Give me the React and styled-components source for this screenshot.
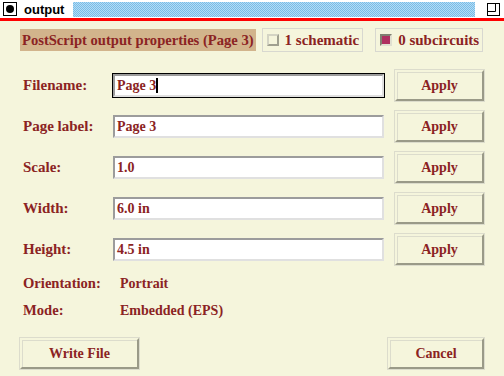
import React from "react";
import styled, { createGlobalStyle, css } from "styled-components";

const ink = "#8b2323";
const paper = "#f5f5dc";

const GlobalStyle = createGlobalStyle`
  html, body {
    margin: 0;
    padding: 0;
    background: ${paper};
  }
  #root {
    width: 504px;
    height: 376px;
  }
`;

const Window = styled.div`
  display: flex;
  flex-direction: column;
  width: 504px;
  height: 376px;
  background: ${paper};
  font-family: "Liberation Serif", "Times New Roman", serif;
  font-weight: bold;
  font-size: 14px;
  color: ${ink};
  overflow: hidden;
`;

const TitleBar = styled.div`
  display: flex;
  align-items: center;
  height: 18px;
  background: #ffffff;
  border-bottom: 3px solid #ff0000;
  padding: 0 4px 0 3px;
`;

const CloseBox = styled.div`
  display: flex;
  align-items: center;
  justify-content: center;
  width: 12px;
  height: 12px;
  border: 1px solid #000;
  &::after {
    content: "";
    width: 8px;
    height: 8px;
    border-radius: 50%;
    background: #000;
  }
`;

const Title = styled.div`
  font-family: "Liberation Sans", Arial, sans-serif;
  font-weight: bold;
  font-size: 13px;
  color: #000;
  margin-left: 7px;
  width: 42px;
`;

const Hatch = styled.div`
  flex: 1;
  height: 15px;
  margin: 0 12px 0 7px;
  background-color: #96cced;
  background-image: repeating-conic-gradient(#78bce8 0 25%, #b4dcf4 0 50%);
  background-size: 2px 2px;
`;

const MaxIcon = styled.svg`
  width: 13px;
  height: 13px;
  display: block;
`;

const Body = styled.div`
  display: flex;
  flex-direction: column;
  padding: 7px 20px 0 20px;
`;

const HeaderRow = styled.div`
  display: flex;
  align-items: center;
  height: 24px;
`;

const HeaderLabel = styled.div`
  display: flex;
  align-items: center;
  height: 22px;
  padding: 0 2px;
  background: #d2b48c;
  font-size: 14.6px;
  white-space: nowrap;
`;

const Toggle = styled.div`
  display: flex;
  align-items: center;
  gap: 6px;
  height: 22px;
  margin-left: ${(p) => p.gap}px;
  padding: 0 3px 0 4px;
  border: 1px solid #d8d8d0;
  font-size: 15px;
  white-space: nowrap;
`;

const Check = styled.div`
  width: 8px;
  height: 8px;
  border: 2px solid;
  border-color: #d4d4c4 #a0a090 #a0a090 #d4d4c4;
  background: ${paper};
  ${(p) =>
    p.on &&
    css`
      border-color: #808070 #e0e0d0 #e0e0d0 #808070;
      background: #b03060;
    `}
`;

const Fields = styled.div`
  display: flex;
  flex-direction: column;
  gap: 10px;
  margin-top: 18px;
`;

const FieldRow = styled.div`
  display: grid;
  grid-template-columns: 82px 271px 89px;
  column-gap: 11px;
  align-items: center;
  height: 31px;
`;

const Label = styled.div`
  padding-left: 3px;
  font-size: 15px;
  white-space: nowrap;
`;

const Input = styled.div`
  display: flex;
  align-items: center;
  box-sizing: border-box;
  height: 23px;
  padding-left: 2px;
  background: #ffffff;
  border: 2px solid;
  border-color: #9c9c9c #e0e0e0 #e0e0e0 #9c9c9c;
  ${(p) =>
    p.focused &&
    css`
      outline: 1px solid #000;
    `}
`;

const Caret = styled.span`
  display: inline-block;
  width: 2px;
  height: 15px;
  background: #000;
`;

const Button = styled.div`
  display: flex;
  align-items: center;
  justify-content: center;
  box-sizing: border-box;
  width: ${(p) => p.w}px;
  height: 31px;
  border: 2px solid;
  border-color: #f5f5dc #9a9a88 #9a9a88 #f5f5dc;
  box-shadow: 0 0 0 1px #dcdccc, inset 1px 1px 0 #dcdccc;
  background: ${paper};
  white-space: nowrap;
`;

const Info = styled.div`
  display: flex;
  flex-direction: column;
  margin-top: 5px;
`;

const InfoRow = styled.div`
  display: grid;
  grid-template-columns: 97px auto;
  align-items: center;
  height: 27px;
  padding-left: 3px;
`;

const InfoLabel = styled.span`
  font-size: 14.6px;
`;

const Footer = styled.div`
  display: flex;
  justify-content: space-between;
  margin-top: 14px;
`;

const fields = [
  { label: "Filename:", value: "Page 3", focused: true },
  { label: "Page label:", value: "Page 3" },
  { label: "Scale:", value: "1.0" },
  { label: "Width:", value: "6.0 in" },
  { label: "Height:", value: "4.5 in" },
];

export default function App() {
  return (
    <Window>
      <GlobalStyle />
      <TitleBar>
        <CloseBox />
        <Title>output</Title>
        <Hatch />
        <MaxIcon viewBox="0 0 13 13">
          <rect x="0.5" y="0.5" width="12" height="12" fill="none" stroke="#000" />
          <polyline points="0.5,8.5 8.5,8.5 8.5,0.5" fill="none" stroke="#000" />
        </MaxIcon>
      </TitleBar>
      <Body>
        <HeaderRow>
          <HeaderLabel>PostScript output properties (Page 3)</HeaderLabel>
          <Toggle gap={6}>
            <Check />1 schematic
          </Toggle>
          <Toggle gap={12}>
            <Check on />0 subcircuits
          </Toggle>
        </HeaderRow>
        <Fields>
          {fields.map((f) => (
            <FieldRow key={f.label}>
              <Label>{f.label}</Label>
              <Input focused={f.focused}>
                {f.value}
                {f.focused && <Caret />}
              </Input>
              <Button w={89}>Apply</Button>
            </FieldRow>
          ))}
        </Fields>
        <Info>
          <InfoRow>
            <InfoLabel>Orientation:</InfoLabel>
            <span>Portrait</span>
          </InfoRow>
          <InfoRow>
            <InfoLabel>Mode:</InfoLabel>
            <span>Embedded (EPS)</span>
          </InfoRow>
        </Info>
        <Footer>
          <Button w={119}>Write File</Button>
          <Button w={96}>Cancel</Button>
        </Footer>
      </Body>
    </Window>
  );
}
